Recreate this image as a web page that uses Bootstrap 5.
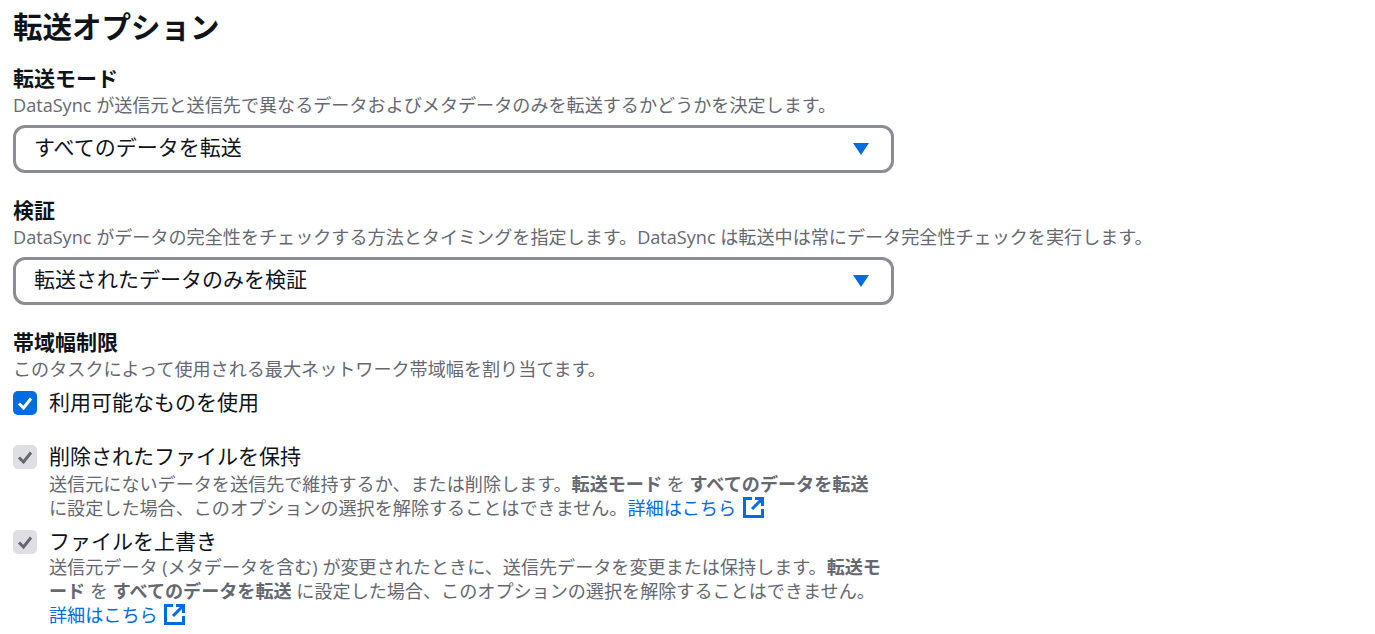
<!DOCTYPE html>
<html lang="ja">
<head>
    <meta charset="UTF-8">
    <title>転送オプション</title>
    <link href="https://cdn.jsdelivr.net/npm/bootstrap@5.3.0/dist/css/bootstrap.min.css" rel="stylesheet">
    <style>
        body {
            font-family: "Open Sans", "Noto Sans CJK JP", sans-serif;
            background-color: #fff;
            color: #0f141a;
            margin: 0;
            overflow: hidden;
        }

        .page-wrap {
            padding: 8px 0 0 13px;
        }

        .page-title {
            font-size: 29.5px;
            line-height: 38px;
            font-weight: 700;
            margin: 0 0 20px;
        }

        .field-block {
            margin-bottom: 25px;
        }

        .field-label {
            font-size: 21px;
            line-height: 25px;
            font-weight: 700;
            margin: 0 0 2px;
        }

        .field-desc {
            font-size: 18.1px;
            line-height: 25px;
            color: #656871;
            margin: 0;
        }

        .select-box {
            width: 881px;
            height: 48px;
            margin-top: 7px;
            border: 3px solid #8c8c94;
            border-radius: 12px;
            font-size: 21px;
            padding: 0 22px 0 18px;
        }

        .select-value {
            margin-bottom: 2px;
        }

        .select-arrow {
            width: 16px;
            height: 12px;
        }

        .opt-first {
            margin-top: 9px;
        }

        .opt-second {
            padding-top: 5px;
        }

        .opt-box {
            width: 24px;
            height: 24px;
            flex: none;
            border-radius: 5px;
            background-color: #dedee3;
        }

        .opt-box.opt-on {
            background-color: #006ce0;
        }

        .opt-label {
            font-size: 21px;
            line-height: 22px;
        }

        .opt-text {
            margin-left: 12px;
            width: 837px;
        }

        .opt-text .field-desc {
            line-height: 24px;
            line-break: anywhere;
            margin: 5px 0 10px;
        }

        .opt-text .field-desc.desc-tight {
            margin-top: 3px;
        }

        .ext-link {
            color: #006ce0;
            text-decoration: none;
            white-space: nowrap;
        }

        .ext-icon {
            width: 21px;
            height: 21px;
            vertical-align: -3px;
            margin-left: 2px;
        }
    </style>
</head>
<body>
<div class="page-wrap">
    <h2 class="page-title">転送オプション</h2>

    <div class="field-block">
        <p class="field-label">転送モード</p>
        <p class="field-desc">DataSync が送信元と送信先で異なるデータおよびメタデータのみを転送するかどうかを決定します。</p>
        <div class="select-box d-flex align-items-center justify-content-between">
            <span class="select-value">すべてのデータを転送</span>
            <svg class="select-arrow" viewBox="0 0 16 12"><path d="M0 0H16L8 12Z" fill="#006ce0"/></svg>
        </div>
    </div>

    <div class="field-block">
        <p class="field-label">検証</p>
        <p class="field-desc">DataSync がデータの完全性をチェックする方法とタイミングを指定します。DataSync は転送中は常にデータ完全性チェックを実行します。</p>
        <div class="select-box d-flex align-items-center justify-content-between">
            <span class="select-value">転送されたデータのみを検証</span>
            <svg class="select-arrow" viewBox="0 0 16 12"><path d="M0 0H16L8 12Z" fill="#006ce0"/></svg>
        </div>
    </div>

    <div class="field-block">
        <p class="field-label">帯域幅制限</p>
        <p class="field-desc">このタスクによって使用される最大ネットワーク帯域幅を割り当てます。</p>
        <div class="opt-first d-flex">
            <svg class="opt-box opt-on" viewBox="0 0 24 24"><path d="M6 12.5L10.5 17L18 7.5" fill="none" stroke="#fff" stroke-width="3"/></svg>
            <div class="opt-text opt-label">利用可能なものを使用</div>
        </div>
    </div>

    <div class="opt-second">
        <div class="d-flex">
            <svg class="opt-box" viewBox="0 0 24 24"><path d="M6 12.5L10.5 17L18 7.5" fill="none" stroke="#656871" stroke-width="3"/></svg>
            <div class="opt-text">
                <div class="opt-label">削除されたファイルを保持</div>
                <p class="field-desc">送信元にないデータを送信先で維持するか、または削除します。<b>転送モード</b> を <b>すべてのデータを転送</b> に設定した場合、このオプションの選択を解除することはできません。<a class="ext-link" href="#">詳細はこちら <svg class="ext-icon" viewBox="0 0 21 21"><path d="M9 1.5H1.5V19.5H19.5V12M12 1.5H19.5V9M19 2L9 12" fill="none" stroke="#006ce0" stroke-width="3"/></svg></a></p>
            </div>
        </div>
        <div class="d-flex">
            <svg class="opt-box" viewBox="0 0 24 24"><path d="M6 12.5L10.5 17L18 7.5" fill="none" stroke="#656871" stroke-width="3"/></svg>
            <div class="opt-text">
                <div class="opt-label">ファイルを上書き</div>
                <p class="field-desc desc-tight">送信元データ (メタデータを含む) が変更されたときに、送信先データを変更または保持します。<b>転送モード</b> を <b>すべてのデータを転送</b> に設定した場合、このオプションの選択を解除することはできません。<a class="ext-link" href="#">詳細はこちら <svg class="ext-icon" viewBox="0 0 21 21"><path d="M9 1.5H1.5V19.5H19.5V12M12 1.5H19.5V9M19 2L9 12" fill="none" stroke="#006ce0" stroke-width="3"/></svg></a></p>
            </div>
        </div>
    </div>
</div>
<script src="https://cdn.jsdelivr.net/npm/bootstrap@5.3.0/dist/js/bootstrap.bundle.min.js"></script>
</body>
</html>
